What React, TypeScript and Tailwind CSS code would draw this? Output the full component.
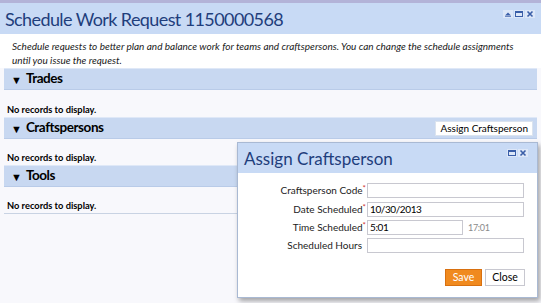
import React from "react";

function WinIcons({ min = true }: { min?: boolean }) {
  return (
    <div className="flex items-center gap-[1px]">
      {min && (
        <svg width="10" height="8" viewBox="0 0 10 8">
          <rect x="0" y="0" width="10" height="8" fill="#dde7f8" />
          <path d="M2 5.5 L5 2.5 L8 5.5 Z" fill="#3a5ea8" />
          <rect x="2" y="6" width="6" height="1" fill="#6d88c0" />
        </svg>
      )}
      <svg width="10" height="8" viewBox="0 0 10 8">
        <rect x="0" y="0" width="10" height="8" fill="#dde7f8" />
        <rect x="1.5" y="1.5" width="7" height="5" fill="none" stroke="#3a5ea8" />
        <rect x="1.5" y="1.5" width="7" height="1.5" fill="#3a5ea8" />
      </svg>
      <svg width="10" height="8" viewBox="0 0 10 8">
        <rect x="0" y="0" width="10" height="8" fill="#dde7f8" />
        <path d="M2.5 1.5 L7.5 6.5 M7.5 1.5 L2.5 6.5" stroke="#3a5ea8" strokeWidth="1.6" />
      </svg>
    </div>
  );
}

function Section({ title, right }: { title: string; right?: React.ReactNode }) {
  return (
    <div className="h-[22px] bg-[#c8d8f1] border-t border-[#dfe8f7] border-b border-b-[#b9cbe8] flex items-center pl-[7px] pr-[4px]">
      <span className="text-[11px] text-black mr-[4px] leading-none">▼</span>
      <span className="text-[13.5px] font-bold text-black leading-none tracking-[-0.45px]">{title}</span>
      <div className="ml-auto">{right}</div>
    </div>
  );
}

function NoRec({ h, line }: { h: number; line?: boolean }) {
  return (
    <div
      className={`flex items-end pl-[3px] pb-[2px] ${line ? "border-b border-[#c9d3e3]" : ""}`}
      style={{ height: h }}
    >
      <span className="text-[9.3px] font-bold text-black leading-[11px]">No records to display.</span>
    </div>
  );
}

function Field({ label, req, value, w, extra }: { label: string; req?: boolean; value?: string; w: number; extra?: string }) {
  return (
    <div className="flex items-center h-[15px]">
      <div className="w-[129px] text-right text-[10px] text-[#222] pr-[1px] leading-[15px]">
        {label}
        {req ? <span className="text-[#d03030] text-[8px] align-top leading-[10px]">*</span> : <span className="inline-block w-[4px]" />}
      </div>
      <div
        className="h-[15px] border border-[#c8c8d0] bg-white text-[10px] text-black leading-[13px] pl-[2px] tracking-[-0.4px]"
        style={{ width: w }}
      >
        {value}
      </div>
      {extra && <span className="ml-[5px] text-[9px] text-[#8a8a8a] leading-[15px] tracking-[-0.3px]">{extra}</span>}
    </div>
  );
}

export default function App() {
  return (
    <div
      className="relative w-[541px] h-[303px] overflow-hidden bg-[#f8f8fc]"
      style={{ fontFamily: 'Lato, "Open Sans", sans-serif' }}
    >
      <div className="h-[3px] bg-[#b3b3d8]" />
      <div className="h-[31px] bg-[#c8daf5] flex items-center pl-[5px] pr-[6px]">
        <span className="text-[18px] text-[#1f3e7c] leading-none tracking-[-0.6px]">Schedule Work Request 1150000568</span>
        <div className="ml-auto -mt-[9px]">
          <WinIcons />
        </div>
      </div>
      <div className="bg-white pl-[12px] pt-[5px] h-[34px] text-[10px] italic text-[#1a1a1a] leading-[14px] whitespace-nowrap">
        Schedule requests to better plan and balance work for teams and craftspersons. You can change the schedule assignments
        <br />
        until you issue the request.
      </div>
      <div className="mx-[4px]">
        <Section title="Trades" />
        <NoRec h={27} />
        <Section
          title="Craftspersons"
          right={
            <div className="h-[15px] px-[4px] bg-white border border-[#dbe3ee] text-[10px] text-black leading-[13px]">
              Assign Craftsperson
            </div>
          }
        />
        <NoRec h={26} />
        <Section title="Tools" />
        <NoRec h={27} line />
      </div>

      <div className="absolute left-[237px] top-[142px] w-[301px] h-[156px] bg-white border border-[#a9b9d3] shadow-[2px_3px_5px_rgba(0,0,0,0.35)] flex flex-col">
        <div className="h-[30px] bg-[#c8daf5] flex items-center pl-[6px] pr-[9px]">
          <span className="text-[17px] text-[#1f3e7c] leading-none">Assign Craftsperson</span>
          <div className="ml-auto -mt-[11px]">
            <WinIcons min={false} />
          </div>
        </div>
        <div className="flex flex-col pt-[10px]">
          <Field label="Craftsperson Code" req w={157} />
          <div className="h-[4px]" />
          <Field label="Date Scheduled" req value="10/30/2013" w={157} />
          <div className="h-[3px]" />
          <Field label="Time Scheduled" req value="5:01" w={96} extra="17:01" />
          <div className="h-[3px]" />
          <Field label="Scheduled Hours" w={157} />
        </div>
        <div className="flex justify-end gap-[3px] pr-[12px] mt-[16px]">
          <div className="h-[17px] w-[37px] bg-[#f08a1f] border border-[#d87010] text-white text-[10.5px] leading-[15px] text-center">Save</div>
          <div className="h-[17px] w-[40px] bg-white border border-[#c8c8d0] text-black text-[10.5px] leading-[15px] text-center">Close</div>
        </div>
      </div>
    </div>
  );
}
